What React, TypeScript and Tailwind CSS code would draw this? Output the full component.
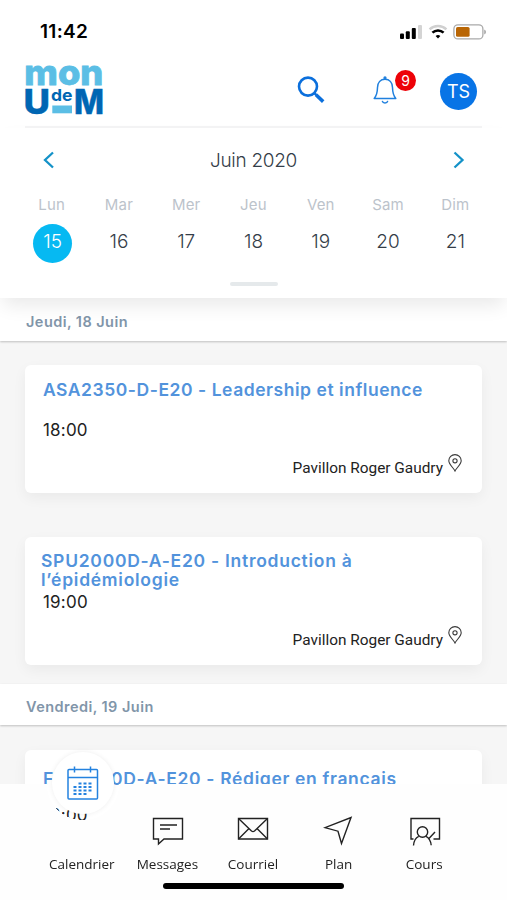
import type { ReactNode } from 'react';

const days = [
  { label: 'Lun', date: 15 },
  { label: 'Mar', date: 16 },
  { label: 'Mer', date: 17 },
  { label: 'Jeu', date: 18 },
  { label: 'Ven', date: 19 },
  { label: 'Sam', date: 20 },
  { label: 'Dim', date: 21 },
];

const selectedDate = 15;

function StatusBar() {
  return (
    <div className="flex h-[62px] items-center justify-between pl-10 pr-5 pt-px">
      <span className="text-[19px] font-semibold leading-6 tracking-[0.3px] text-black">11:42</span>
      <svg width="88" height="18" viewBox="0 0 88 18">
        {/* Signal */}
        <rect x="1" y="10.6" width="4" height="5.4" rx="1" fill="#000" />
        <rect x="6.8" y="8.3" width="4" height="7.7" rx="1" fill="#000" />
        <rect x="12.8" y="5" width="4" height="11" rx="1" fill="#000" />
        <rect x="19" y="2" width="4" height="14" rx="1" fill="#d4d4d4" />
        {/* Wifi */}
        <path d="M30.6 6.3a12.3 12.3 0 0 1 16.8 0" fill="none" stroke="#d0d0d0" strokeWidth="2.5" />
        <path d="M33.4 9.6a8.3 8.3 0 0 1 11.2 0" fill="none" stroke="#000" strokeWidth="2.6" />
        <path d="M36.6 13a4 4 0 0 1 4.8 0L39 15.6z" fill="#000" />
        {/* Battery */}
        <rect x="54.9" y="1.9" width="29" height="14" rx="4" fill="none" stroke="#a9a9a9" strokeWidth="1.3" />
        <rect x="57" y="4" width="13.6" height="9.8" rx="1.6" fill="#b96605" />
        <path d="M85.3 6.6v4.8a2.6 2.6 0 0 0 0-4.8z" fill="#999" />
      </svg>
    </div>
  );
}

function Logo() {
  return (
    <svg className="overflow-visible" width="80" height="54" viewBox="0 0 80 54" fontFamily="Inter, sans-serif">
      <text x="-0.7" y="20.5" fontSize="35" fontWeight="800" fill="#5bbee5" stroke="#5bbee5" strokeWidth="0.8" textLength="79" lengthAdjust="spacingAndGlyphs">mon</text>
      <text x="-1.5" y="49.5" fontSize="34" fontWeight="800" fill="#0066b3" stroke="#0066b3" strokeWidth="0.4" textLength="26.5" lengthAdjust="spacingAndGlyphs">U</text>
      <text x="26" y="36.8" fontSize="16.5" fontWeight="700" fill="#0066b3" textLength="21.5" lengthAdjust="spacingAndGlyphs">de</text>
      <text x="49" y="49.5" fontSize="34" fontWeight="800" fill="#0066b3" stroke="#0066b3" strokeWidth="0.4" textLength="30" lengthAdjust="spacingAndGlyphs">M</text>
      <rect x="27.3" y="41.5" width="19.700" height="7.8" fill="#5bbee5" />
    </svg>
  );
}

function Header() {
  return (
    <header className="mx-[25px] flex h-[66px] items-center border-b-2 border-[#f4f4f5] pb-[6px]">
      <Logo />
      <svg className="ml-[191px]" width="30" height="30" viewBox="0 0 30 30" fill="none" stroke="#0b6fdc">
        <circle cx="12" cy="10.6" r="9" strokeWidth="2.6" />
        <path d="M18.4 17.2l2 2" strokeWidth="2.4" />
        <path d="M20 18.8l7.2 6.8" strokeWidth="3.6" />
      </svg>
      <div className="relative ml-[47px] h-[30px] w-[24px]">
        <svg width="24" height="30" viewBox="0 0 24 30" fill="none" stroke="#2080de" strokeWidth="1.5">
          <path d="M1.2 22.4C4 19.2 4.4 17 4.500 11.500 4.600 6.300 7.600 3.200 12 3.200s7.400 3.100 7.500 8.300c.1 5.500.5 7.700 3.300 10.900z" strokeLinejoin="round" />
          <circle cx="12" cy="2" r="0.9" />
          <path d="M9.200 24.900a2.900 2.900 0 0 0 5.600 0" />
        </svg>
        <span className="absolute -right-[19px] -top-[6px] flex h-[21px] w-[21px] items-center justify-center rounded-full bg-[#ed0208] text-[14px] text-white">
          9
        </span>
      </div>
      <div className="ml-[43px] flex h-[37px] w-[37px] items-center justify-center rounded-full bg-[#0874e6] text-[18px] tracking-[-0.2px] text-white">
        TS
      </div>
    </header>
  );
}

function Calendar() {
  return (
    <section className="relative z-10 h-[170px] bg-white shadow-[0_10px_18px_-3px_rgba(0,0,0,0.09)]">
      <div className="flex h-[64px] items-center justify-between px-[42px]">
        <svg width="14" height="18" viewBox="0 0 14 18" fill="none" stroke="#1492c8" strokeWidth="2.3">
          <path d="M11 1.500L3 9l8 7.500" />
        </svg>
        <h2 className="pt-px text-[19px] font-light leading-6 tracking-[-0.3px] text-[#343d48]">Juin 2020</h2>
        <svg width="14" height="18" viewBox="0 0 14 18" fill="none" stroke="#1492c8" strokeWidth="2.3">
          <path d="M3.500 1.500L11.500 9l-8 7.500" />
        </svg>
      </div>
      <div className="grid grid-cols-7 px-[18px] pt-px">
        {days.map((day) => (
          <div key={day.date} className="flex flex-col items-center">
            <span className="text-[15px] leading-6 tracking-[0.2px] text-[#bcc3cb]">{day.label}</span>
            <span
              className={
                day.date === selectedDate
                  ? 'ml-[2px] mt-[7px] flex h-[39px] w-[39px] justify-center rounded-full bg-[#06b9f2] pt-[6px] text-[19px] font-light leading-6 text-white'
                  : 'mt-[13px] text-[19px] font-light leading-6 text-[#343d48]'
              }
            >
              {day.date}
            </span>
          </div>
        ))}
      </div>
      <div className="mx-auto mt-[19px] h-1 w-12 rounded-full bg-[#e5e9eb]" />
    </section>
  );
}

function DayHeading({ children, className }: { children: ReactNode; className: string }) {
  return (
    <h3 className={`flex items-center bg-white pl-[26px] text-[14.500px] font-semibold tracking-[0.45px] text-[#8195a9] shadow-[0_1px_2px_rgba(0,0,0,0.22)] ${className}`}>
      {children}
    </h3>
  );
}

function PinIcon() {
  return (
    <svg width="14" height="18" viewBox="0 0 14 18" fill="none" stroke="#3a3a3a" strokeWidth="1.1">
      <path d="M7 17C5.500 13.800 .8 10.500 .8 6.800a6.200 6.200 0 0 1 12.400 0C13.200 10.500 8.500 13.800 7 17z" />
      <circle cx="7" cy="6.800" r="2.100" />
    </svg>
  );
}

type CourseProps = {
  title: ReactNode;
  time: string;
  className: string;
  titleClass: string;
};

function CourseCard({ title, time, className, titleClass }: CourseProps) {
  return (
    <article className={`mx-[25px] flex h-[128px] shrink-0 flex-col rounded-md bg-white pl-[18px] pr-5 shadow-[0_5px_14px_rgba(0,0,0,0.05)] ${className}`}>
      <h4 className={`whitespace-nowrap text-[17.500px] font-semibold leading-[19px] text-[#5293dc] ${titleClass}`}>{title}</h4>
      <p className="text-[17px] leading-5 tracking-[0.2px] text-[#222]">{time}</p>
      <div className="mb-[15px] mt-auto flex items-start justify-end gap-[5px]">
        <span className="pt-[4px] font-[Roboto,sans-serif] text-[15.400px] leading-5 text-[#222]">Pavillon Roger Gaudry</span>
        <PinIcon />
      </div>
    </article>
  );
}

const tabs = [
  { label: 'Calendrier', icon: null },
  {
    label: 'Messages',
    icon: (
      <>
        <path d="M1.500 3.500h29v20.500H12l-5.500 5v-5h-5z" />
        <path d="M8 10h17M8 14h10" />
      </>
    ),
  },
  {
    label: 'Courriel',
    icon: (
      <>
        <path d="M1.500 3.500h29V24h-29z" />
        <path d="M1.500 3.500L14.500 16q1.500 1.200 3 0l13-12.500M1.500 24l10.500-10.500M30.500 24L20 13.500" />
      </>
    ),
  },
  {
    label: 'Plan',
    icon: <path d="M28 2.500L18.500 28.500 15 16.200 2 12.600z" />,
  },
  {
    label: 'Cours',
    icon: (
      <>
        <path d="M4.500 24h-2.500V3.500h28.500V24h-6" />
        <circle cx="13.500" cy="17" r="5.200" />
        <path d="M4.500 30.500c.4-5 2.500-8 5.200-9.200M17 21.300c3.200 1.600 4.800 4.600 5.200 9M19.500 24l6.500-7" />
      </>
    ),
  },
];

function TabBar() {
  return (
    <nav className="absolute inset-x-0 bottom-0 h-[116px]">
      {/* White bar with a round notch for the active tab */}
      <div className="flex h-full flex-col bg-[#fefefe] [mask-image:radial-gradient(circle_at_83px_0px,transparent_36px,black_36.5px)]">
        <div className="flex px-[39px] pt-[31px]">
          {tabs.map((tab) => (
            <div key={tab.label} className="flex w-[85.600px] flex-col items-center">
              <svg className="ml-px" width="32" height="32" viewBox="0 0 32 32" fill="none" stroke="#222" strokeWidth="1.4">
                {tab.icon}
              </svg>
              <span className="mt-[7px] font-['Open_Sans',sans-serif] text-[13.500px] leading-5 text-[#222]">{tab.label}</span>
            </div>
          ))}
        </div>
        <div className="ml-[163px] mt-[9px] h-[6px] w-[181px] rounded-full bg-black" />
      </div>
      <div className="absolute -top-[32px] left-[52px] flex h-[62px] w-[62px] items-center justify-center rounded-full bg-white shadow-[0_0_5px_rgba(0,0,0,0.07)]">
        <svg className="-ml-px" width="32" height="34" viewBox="0 0 32 34" fill="none" stroke="#2482df" strokeWidth="1.5">
          <rect x="1" y="3.500" width="29.500" height="29.500" rx="1" />
          <path d="M1 11.500h29.500M7.500 0.500v6M23.500 0.500v6" />
          <path d="M11.500 17.500h14M6.500 21h19M6.500 24.500h19M6.500 28h14" strokeWidth="2" strokeDasharray="3 2" />
        </svg>
      </div>
    </nav>
  );
}

export default function App() {
  return (
    <div className="relative flex h-[900px] w-[507px] flex-col overflow-hidden bg-white font-[Inter,sans-serif]">
      <StatusBar />
      <Header />
      <Calendar />
      <main className="flex min-h-0 flex-1 flex-col overflow-hidden bg-[#f6f6f6]">
        <DayHeading className="h-[43px] shrink-0 pt-[4px]">Jeudi, 18 Juin</DayHeading>
        <CourseCard
          title="ASA2350-D-E20 - Leadership et influence"
          time="18:00"
          className="mt-6"
          titleClass="pt-[15px] pb-[21px] tracking-[0.54px]"
        />
        <CourseCard
          title={
            <>
              SPU2000D-A-E20 - Introduction à
              <br />
              l’épidémiologie
            </>
          }
          time="19:00"
          className="mt-[44px]"
          titleClass="-ml-[2px] pt-[14px] pb-[3px] tracking-[0.73px]"
        />
        <DayHeading className="mt-[19px] h-[41px] shrink-0 pt-[4px]">Vendredi, 19 Juin</DayHeading>
        <CourseCard
          title="FRA1000D-A-E20 - Rédiger en français"
          time="18:00"
          className="mt-[25px]"
          titleClass="pt-[19px] pb-[17px] tracking-[0.65px]"
        />
      </main>
      <TabBar />
    </div>
  );
}
